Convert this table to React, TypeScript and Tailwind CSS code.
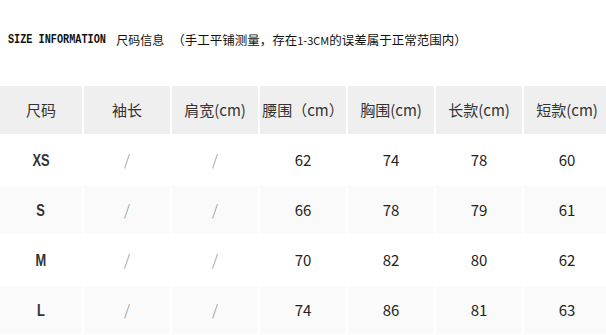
const HEADERS = ["尺码", "袖长", "肩宽(cm)", "腰围（cm）", "胸围(cm)", "长款(cm)", "短款(cm)"];

const ROWS = [
  ["XS", "/", "/", "62", "74", "78", "60"],
  ["S", "/", "/", "66", "78", "79", "61"],
  ["M", "/", "/", "70", "82", "80", "62"],
  ["L", "/", "/", "74", "86", "81", "63"],
];

const CJK = { fontFamily: '"Noto Sans CJK SC", "Noto Sans", sans-serif' };
const MONO = { fontFamily: '"Liberation Mono", monospace' };
const NARROW = { fontFamily: '"Liberation Sans", "Noto Sans", sans-serif' };

export default function App() {
  return (
    <div className="h-[335px] w-[606px] overflow-hidden bg-white text-[#222]" style={CJK}>
      <div className="flex h-[86px] items-center pb-[6px] pl-[8px] text-[12px] leading-none text-[#111]">
        <span className="mr-[-17px] inline-block origin-left scale-x-[0.85] text-[12px] font-bold" style={MONO}>
          SIZE INFORMATION
        </span>
        <span className="ml-[10px]">尺码信息</span>
        <span className="ml-[8px] text-[12.5px]">
          （手工平铺测量，存在<span className="text-[11px]">1-3CM</span>的误差属于正常范围内）
        </span>
      </div>

      <div className="grid grid-cols-[82px_repeat(6,86px)] gap-[2px]">
        {HEADERS.map((h) => (
          <div key={h} className="flex h-[48px] items-center justify-center bg-[#efefef] text-[15px] text-[#333]">
            {h}
          </div>
        ))}
        {ROWS.map((row, r) =>
          row.map((cell, c) => (
            <div
              key={`${r}-${c}`}
              className={`flex h-[48px] items-center justify-center text-[15px] ${r % 2 === 1 ? "bg-[#fafafa]" : "bg-white"}`}
            >
              {c === 0 ? (
                <span className="inline-block scale-x-[0.78] text-[16.5px] font-semibold text-[#333]" style={NARROW}>
                  {cell}
                </span>
              ) : cell === "/" ? (
                <span className="font-light text-[#888]">{cell}</span>
              ) : (
                <span>{cell}</span>
              )}
            </div>
          ))
        )}
      </div>
    </div>
  );
}
